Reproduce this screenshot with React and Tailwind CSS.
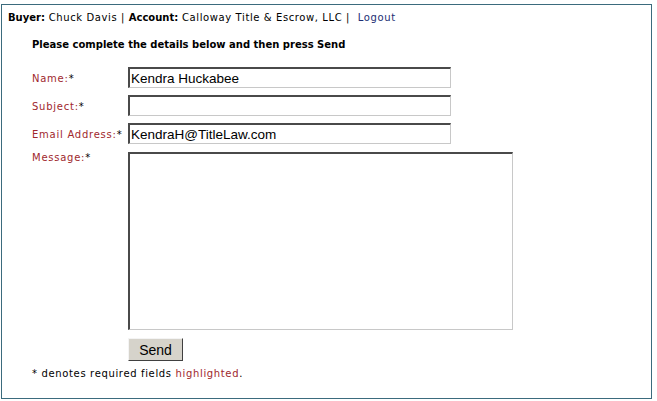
import React from "react";

const label =
  "text-[#a0282d] text-[10px] leading-[13px] tracking-[0.75px] whitespace-nowrap";
const field =
  "block bg-white border-t-2 border-l-2 border-b border-r border-t-[#4a4a4a] border-l-[#4a4a4a] border-b-[#c8c8c8] border-r-[#c8c8c8] px-[1px] text-[13.5px] text-black outline-none";
const arial = { fontFamily: '"Liberation Sans", Arial, sans-serif' };

const Row = ({ name, top = "pt-[5px]", children }) => (
  <div className="flex items-start">
    <div className={`w-[96px] shrink-0 ${label} ${top}`}>
      {name}:<span className="text-black">*</span>
    </div>
    {children}
  </div>
);

export default function App() {
  return (
    <div
      className="bg-white w-[657px] h-[401px] pt-[4px] pl-[1px]"
      style={{ fontFamily: '"DejaVu Sans", Verdana, sans-serif' }}
    >
      <div className="w-[651px] h-[395px] border border-[#3b6b7d] pl-[6px] pt-[6px]">
        <div className="text-[10px] leading-[13px] text-black tracking-[0.6px] whitespace-nowrap">
          <b className="tracking-normal">Buyer:</b> Chuck Davis | <b className="tracking-normal">Account:</b> Calloway Title &amp; Escrow, LLC |{" "}
          <span className="ml-[4px] text-[#1c2e74]">Logout</span>
        </div>
        <div className="pl-[24px] pt-[14px]">
          <div className="text-[10px] leading-[13px] font-bold text-black">
            Please complete the details below and then press Send
          </div>
          <form
            className="mt-[16px] flex flex-col gap-[7px]"
            onSubmit={(e) => e.preventDefault()}
          >
            <Row name="Name">
              <input
                className={`${field} w-[323px] h-[21px]`}
                defaultValue="Kendra Huckabee"
                style={arial}
              />
            </Row>
            <Row name="Subject">
              <input className={`${field} w-[323px] h-[21px]`} style={arial} />
            </Row>
            <Row name="Email Address">
              <input
                className={`${field} w-[323px] h-[21px]`}
                defaultValue="KendraH@TitleLaw.com"
                style={arial}
              />
            </Row>
            <Row name="Message" top="pt-0">
              <textarea
                className={`${field} w-[385px] h-[178px] mt-[1px] resize-none`}
                style={arial}
              />
            </Row>
            <div className="pl-[96px] pt-[1px]">
              <button
                type="submit"
                className="w-[55px] h-[23px] bg-[#d6d3cb] border border-t-[#f4f4f4] border-l-[#f4f4f4] border-b-[#404040] border-r-[#404040] text-[14px] leading-[22px] text-black"
                style={arial}
              >
                Send
              </button>
            </div>
          </form>
          <div className="mt-[5px] text-[10px] leading-[13px] text-black tracking-[0.65px]">
            * denotes required fields <span className="text-[#a0282d]">highlighted</span>.
          </div>
        </div>
      </div>
    </div>
  );
}
